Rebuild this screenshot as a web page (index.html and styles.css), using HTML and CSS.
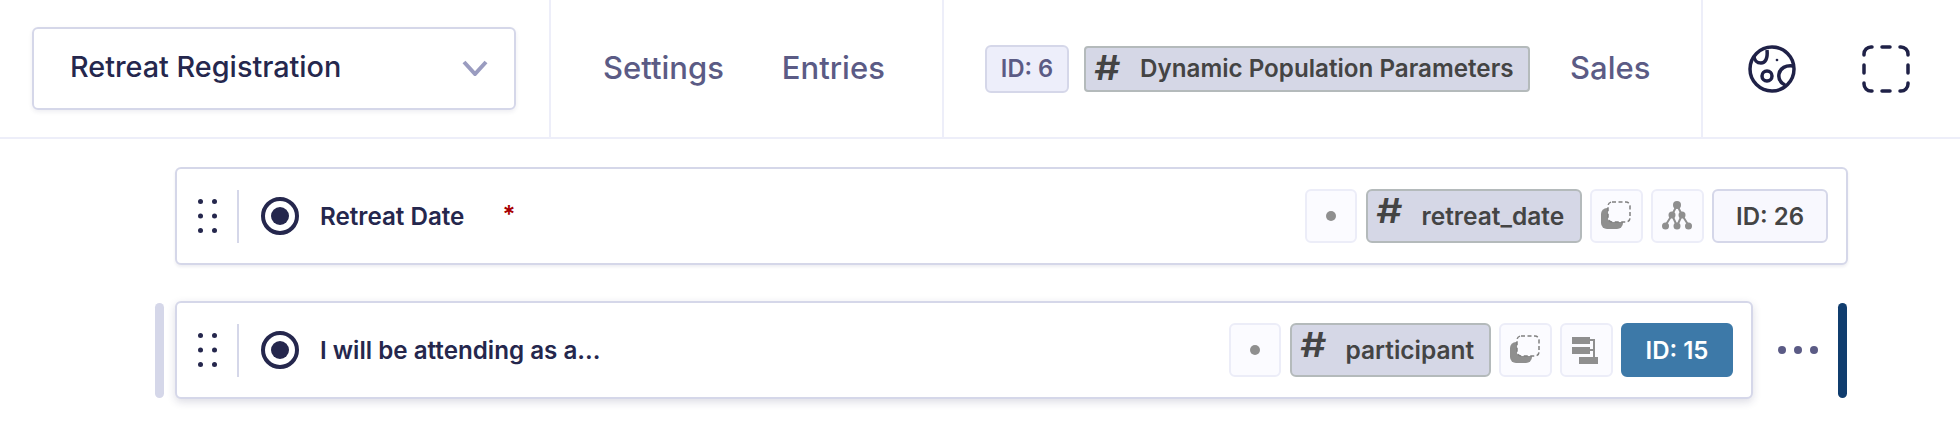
FILE: index.html
```html
<!DOCTYPE html>
<html>
<head>
    <title>Form Editor</title>
    <link rel="stylesheet" href="styles.css">
</head>
<body>

    <header class="topbar">
        <div class="section section-form">
            <div class="form-select">
                <span>Retreat Registration</span>
                <svg class="chevron" viewBox="0 0 26 16"><path d="M2 2l11 12L24 2"/></svg>
            </div>
        </div>
        <nav class="section section-links">
            <a class="nav-link">Settings</a>
            <a class="nav-link">Entries</a>
        </nav>
        <div class="section section-page">
            <span class="page-id">ID: 6</span>
            <span class="page-name"><span class="hash">#</span>Dynamic Population Parameters</span>
            <a class="nav-link sales">Sales</a>
        </div>
        <div class="section section-icons">
            <svg class="top-icon" viewBox="0 0 48 48">
                <circle cx="24" cy="24" r="22"/>
                <path d="M6 11c0 4 3 7 7 7s7-4 6-13"/>
                <circle cx="19" cy="31" r="5"/>
                <path d="M45 21c-7-1-13 2-14 8s2 9 6 11"/>
                <circle class="pip" cx="29" cy="15" r="0.600"/>
            </svg>
            <svg class="top-icon dashed-icon" viewBox="0 0 48 48">
                <path d="M2 10V9a7 7 0 0 1 7-7h1M20 2h8M38 2h1a7 7 0 0 1 7 7v1M46 20v8M46 38v1a7 7 0 0 1-7 7h-1M28 46h-8M10 46H9a7 7 0 0 1-7-7v-1M2 28v-8"/>
            </svg>
        </div>
    </header>

    <main class="fields">
        <div class="field-row field-row-plain">
            <div class="card">
                <svg class="grip" viewBox="0 0 19 34">
                    <circle cx="2.5" cy="2.5" r="2.5"/><circle cx="16.5" cy="2.5" r="2.5"/>
                    <circle cx="2.5" cy="17" r="2.5"/><circle cx="16.5" cy="17" r="2.5"/>
                    <circle cx="2.5" cy="31.5" r="2.5"/><circle cx="16.5" cy="31.5" r="2.5"/>
                </svg>
                <span class="rule"></span>
                <span class="radio"></span>
                <span class="field-label">Retreat Date</span>
                <span class="required">*</span>
                <div class="tools">
                    <span class="tool"><span class="dot"></span></span>
                    <span class="name-chip name-retreat"><span class="hash">#</span>retreat_date</span>
                    <span class="tool">
                        <svg class="tool-icon" viewBox="0 0 30 30">
                            <rect class="fill" x="0" y="7" width="22" height="21" rx="6"/>
                            <rect class="dash" x="7" y="1" width="22" height="20" rx="4"/>
                        </svg>
                    </span>
                    <span class="tool">
                        <svg class="tool-icon" viewBox="0 0 30 30">
                            <path class="line" d="M15 4L10 14 3 25M10 14l5 11M15 4l5 10 7 11M20 14l-5 11"/>
                            <circle class="fill" cx="15" cy="4" r="4"/>
                            <circle class="fill" cx="10" cy="14" r="3.500"/>
                            <circle class="fill" cx="20" cy="14" r="3.500"/>
                            <circle class="fill" cx="3.500" cy="25" r="3.500"/>
                            <circle class="fill" cx="15" cy="25" r="3.500"/>
                            <circle class="fill" cx="26.500" cy="25" r="3.500"/>
                        </svg>
                    </span>
                    <span class="id-chip id-wide">ID: 26</span>
                </div>
            </div>
        </div>

        <div class="field-row">
            <span class="side-bar"></span>
            <div class="card card-active">
                <svg class="grip" viewBox="0 0 19 34">
                    <circle cx="2.5" cy="2.5" r="2.5"/><circle cx="16.5" cy="2.5" r="2.5"/>
                    <circle cx="2.5" cy="17" r="2.5"/><circle cx="16.5" cy="17" r="2.5"/>
                    <circle cx="2.5" cy="31.5" r="2.5"/><circle cx="16.5" cy="31.5" r="2.5"/>
                </svg>
                <span class="rule"></span>
                <span class="radio"></span>
                <span class="field-label">I will be attending as a...</span>
                <div class="tools">
                    <span class="tool"><span class="dot"></span></span>
                    <span class="name-chip name-participant"><span class="hash">#</span>participant</span>
                    <span class="tool">
                        <svg class="tool-icon" viewBox="0 0 30 30">
                            <rect class="fill" x="0" y="7" width="22" height="21" rx="6"/>
                            <rect class="dash" x="7" y="1" width="22" height="20" rx="4"/>
                        </svg>
                    </span>
                    <span class="tool">
                        <svg class="tool-icon" viewBox="0 0 30 30">
                            <rect class="fill" x="1" y="2" width="18" height="7"/>
                            <rect class="fill" x="1" y="12" width="18" height="7"/>
                            <rect class="fill" x="8" y="22" width="19" height="7"/>
                            <path class="line" d="M19 5h4v17M19 15h4"/>
                        </svg>
                    </span>
                    <span class="id-chip id-active">ID: 15</span>
                </div>
            </div>
            <svg class="more" viewBox="0 0 40 10">
                <circle cx="4" cy="5" r="4"/><circle cx="20" cy="5" r="4"/><circle cx="36" cy="5" r="4"/>
            </svg>
            <span class="side-bar side-bar-dark"></span>
        </div>
    </main>

</body>
</html>
```

FILE: styles.css
```css
body, html {
    height: 100%;
    margin: 0;
    font-family: Inter, "Liberation Sans", sans-serif;
    background: #ffffff;
    overflow: hidden;
}

.topbar {
    display: flex;
    height: 137px;
    border-bottom: 2px solid #edeef9;
}

.section {
    display: flex;
    align-items: center;
    box-sizing: border-box;
    height: 100%;
    border-right: 2px solid #edeef9;
}

.section-form {
    width: 551px;
    padding: 0 33px 0 32px;
}

.form-select {
    display: flex;
    align-items: center;
    justify-content: space-between;
    box-sizing: border-box;
    width: 485px;
    height: 83px;
    margin-top: -1px;
    padding: 0 26px 0 36px;
    border: 2px solid #d5d7e9;
    border-radius: 6px;
    box-shadow: 0 2px 4px rgba(40, 40, 90, 0.08);
    color: #25274d;
    font-size: 28.8px;
    font-weight: 500;
    line-height: 1;
}

.form-select span {
    margin-top: -2px;
}

.chevron {
    width: 26px;
    height: 16px;
    fill: none;
    stroke: #9a9cc0;
    stroke-width: 4;
}

.section-links {
    width: 393px;
    padding-left: 52px;
    gap: 58px;
}

.nav-link {
    margin-top: -2px;
    color: #5b5b85;
    font-size: 31px;
    font-weight: 500;
}

.section-page {
    width: 759px;
    padding-left: 41px;
}

.page-id {
    display: flex;
    align-items: center;
    justify-content: center;
    box-sizing: border-box;
    width: 84px;
    height: 48px;
    margin-right: 15px;
    border: 2px solid #d5d7e9;
    border-radius: 6px;
    background: #edeefa;
    color: #5b5b85;
    font-size: 23.7px;
    font-weight: 600;
}

.page-name {
    display: flex;
    align-items: center;
    box-sizing: border-box;
    width: 446px;
    height: 46px;
    padding-left: 9px;
    border: 2px solid #b4babb;
    border-radius: 4px;
    background: #d5d7e6;
    color: #444444;
    font-size: 24.2px;
    font-weight: 600;
    white-space: nowrap;
}

.hash {
    display: inline-block;
    width: 25px;
    margin-right: 20px;
    font-size: 34px;
    line-height: 1;
    font-weight: 600;
    text-align: center;
    transform: scaleX(1.2);
}

.page-name .hash {
    margin-top: -2px;
}

.sales {
    margin-left: 40px;
}

.section-icons {
    flex: 1;
    gap: 66px;
    padding-left: 45px;
    border-right: none;
}

.top-icon {
    width: 48px;
    height: 48px;
    fill: none;
    stroke: #1f2147;
    stroke-width: 3.5;
}

.top-icon .pip {
    fill: #1f2147;
    stroke-width: 1.5;
}

.dashed-icon {
    stroke-linecap: round;
}

.fields {
    display: flex;
    flex-direction: column;
    gap: 36px;
    padding: 28px 0 0 155px;
}

.field-row {
    display: flex;
    align-items: center;
    height: 98px;
}

.field-row-plain {
    padding-left: 20px;
}

.side-bar {
    width: 9px;
    height: 95px;
    margin-right: 11px;
    border-radius: 5px;
    background: #d5d7e9;
}

.side-bar-dark {
    margin: 0;
    background: #103d6e;
}

.card {
    display: flex;
    align-items: center;
    box-sizing: border-box;
    width: 1673px;
    height: 98px;
    padding: 0 18px 0 21px;
    border: 2px solid #d5d7e9;
    border-radius: 6px;
    background: #ffffff;
    box-shadow: 0 2px 3px rgba(40, 40, 90, 0.08);
}

.card-active {
    width: 1578px;
    box-shadow: 0 3px 8px rgba(40, 40, 90, 0.16);
}

.grip {
    width: 19px;
    height: 34px;
    fill: #25274d;
}

.rule {
    width: 2px;
    height: 53px;
    margin: 0 22px 0 20px;
    background: #d5d7e9;
}

.radio {
    display: flex;
    align-items: center;
    justify-content: center;
    box-sizing: border-box;
    width: 38px;
    height: 38px;
    margin-right: 21px;
    border: 4px solid #25274d;
    border-radius: 50%;
}

.radio::after {
    content: "";
    width: 18px;
    height: 18px;
    border-radius: 50%;
    background: #25274d;
}

.field-label {
    color: #25274d;
    font-size: 24.2px;
    font-weight: 600;
}

.required {
    margin: -4px 0 0 38px;
    color: #a80000;
    font-size: 24px;
    font-weight: 600;
}

.tools {
    display: flex;
    align-items: center;
    gap: 8.5px;
    margin-left: auto;
}

.tool {
    display: flex;
    align-items: center;
    justify-content: center;
    box-sizing: border-box;
    width: 52.5px;
    height: 54px;
    border: 2px solid #ecedf8;
    border-radius: 6px;
    background: #fbfbff;
}

.dot {
    width: 10px;
    height: 10px;
    border-radius: 50%;
    background: #8f8f8f;
}

.tool-icon {
    width: 30px;
    height: 30px;
}

.tool-icon .fill {
    fill: #8f8f8f;
}

.tool-icon .line {
    fill: none;
    stroke: #8f8f8f;
    stroke-width: 2;
}

.tool-icon .dash {
    fill: #fbfbff;
    stroke: #808080;
    stroke-width: 1.5;
    stroke-dasharray: 4 2.5;
}

.name-chip {
    display: flex;
    align-items: center;
    box-sizing: border-box;
    height: 54px;
    padding-left: 9px;
    border: 2px solid #b4babb;
    border-radius: 6px;
    background: #d5d7e6;
    color: #444444;
    font-size: 24.5px;
    font-weight: 600;
    white-space: nowrap;
}

.name-chip .hash {
    margin-top: -10px;
}

.name-retreat {
    width: 216px;
}

.name-participant {
    width: 201px;
}

.id-chip {
    display: flex;
    align-items: center;
    justify-content: center;
    box-sizing: border-box;
    height: 54px;
    border: 2px solid #d5d7e9;
    border-radius: 6px;
    background: #f8f8fe;
    color: #444444;
    font-size: 24px;
    font-weight: 600;
}

.id-wide {
    width: 116px;
}

.id-active {
    width: 112px;
    border-color: #3d79a8;
    background: #3d79a8;
    color: #ffffff;
}

.more {
    width: 40px;
    height: 10px;
    margin: 0 20px 0 25px;
    fill: #5b5b85;
}
```
